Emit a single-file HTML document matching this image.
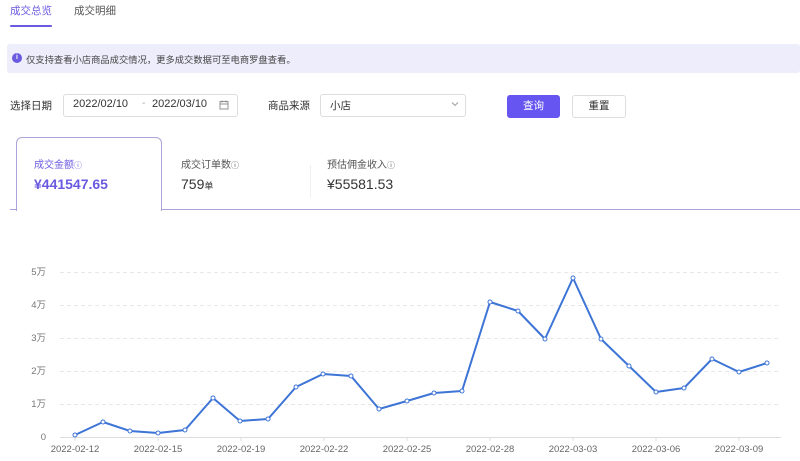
<!DOCTYPE html>
<html><head><meta charset="utf-8"><style>
*{margin:0;padding:0;box-sizing:border-box}
body{width:800px;height:461px;background:#fff;font-family:"Liberation Sans","Noto Sans CJK SC",sans-serif;position:relative;overflow:hidden;color:#333}
.a{position:absolute;white-space:nowrap}
</style></head><body>
<div class="a" style="left:10px;top:3px;font-size:10.5px;color:#6a5ae0">成交总览</div>
<div class="a" style="left:10px;top:25px;width:42px;height:2px;background:#6a5ae0;border-radius:1px"></div>
<div class="a" style="left:74px;top:3px;font-size:10.5px;color:#555">成交明细</div>

<div class="a" style="left:7px;top:44px;width:793px;height:29px;background:#eeedfb;border-radius:3px"></div>
<div class="a" style="left:12px;top:53px;width:10px;height:10px;border-radius:50%;background:#6a5ae0;color:#fff;font-size:7px;line-height:10px;text-align:center;font-weight:bold">i</div>
<div class="a" style="left:26px;top:52px;font-size:9.3px;color:#444">仅支持查看小店商品成交情况，更多成交数据可至电商罗盘查看。</div>

<div class="a" style="left:10px;top:98px;font-size:10.5px;color:#333">选择日期</div>
<div class="a" style="left:63px;top:94px;width:175px;height:23px;border:1px solid #ddd;border-radius:3px"></div>
<div class="a" style="left:73px;top:98px;font-size:11px;color:#333">2022/02/10</div>
<div class="a" style="left:142px;top:98px;font-size:10px;color:#aaa">-</div>
<div class="a" style="left:152px;top:98px;font-size:11px;color:#333">2022/03/10</div>
<svg class="a" style="left:219px;top:100px" width="10" height="10" viewBox="0 0 10 10"><rect x="1" y="1.5" width="8" height="7.5" fill="none" stroke="#888" stroke-width="0.9"/><line x1="1" y1="4" x2="9" y2="4" stroke="#888" stroke-width="0.9"/><line x1="3" y1="0.5" x2="3" y2="2.5" stroke="#888"/><line x1="7" y1="0.5" x2="7" y2="2.5" stroke="#888"/></svg>
<div class="a" style="left:268px;top:98px;font-size:10.5px;color:#333">商品来源</div>
<div class="a" style="left:320px;top:94px;width:146px;height:23px;border:1px solid #ddd;border-radius:3px"></div>
<div class="a" style="left:330px;top:98px;font-size:10.5px;color:#333">小店</div>
<svg class="a" style="left:451px;top:101px" width="8" height="6" viewBox="0 0 8 6"><polyline points="1,1.5 4,4.5 7,1.5" fill="none" stroke="#999" stroke-width="0.9"/></svg>
<div class="a" style="left:507px;top:95px;width:53px;height:23px;background:#6655f0;border-radius:3px;color:#fff;font-size:10.5px;line-height:23px;text-align:center">查询</div>
<div class="a" style="left:572px;top:95px;width:54px;height:23px;border:1px solid #ddd;border-radius:3px;color:#333;font-size:10.5px;line-height:21px;text-align:center">重置</div>

<div class="a" style="left:10px;top:209px;width:7px;height:1px;background:#aaa5d8"></div>
<div class="a" style="left:161px;top:209px;width:639px;height:1px;background:#aaa5d8"></div>
<div class="a" style="left:16px;top:137px;width:146px;height:74px;border:1px solid #aaa5d8;border-bottom:none;border-radius:6px 6px 0 0;background:#fff"></div>
<div class="a" style="left:34px;top:156px;font-size:10px;color:#6a5ae0">成交金额<span style="font-size:8px">ⓘ</span></div>
<div class="a" style="left:34px;top:176px;font-size:14px;font-weight:bold;color:#6a5ae0">¥441547.65</div>
<div class="a" style="left:181px;top:156px;font-size:10px;color:#555">成交订单数<span style="font-size:8px">ⓘ</span></div>
<div class="a" style="left:181px;top:176px;font-size:14px;color:#333">759<span style="font-size:9px">单</span></div>
<div class="a" style="left:310px;top:165px;width:1px;height:33px;background:#f0f0f0"></div>
<div class="a" style="left:327px;top:156px;font-size:10px;color:#555">预估佣金收入<span style="font-size:8px">ⓘ</span></div>
<div class="a" style="left:327px;top:176px;font-size:14px;color:#333">¥55581.53</div>

<svg class="a" style="left:0;top:0" width="800" height="461">
<g stroke="#e8e8e8" stroke-dasharray="4,3" stroke-width="1">
<line x1="60" y1="272.5" x2="781" y2="272.5"/><line x1="60" y1="305.5" x2="781" y2="305.5"/><line x1="60" y1="338.5" x2="781" y2="338.5"/><line x1="60" y1="371.5" x2="781" y2="371.5"/><line x1="60" y1="404.5" x2="781" y2="404.5"/>
</g>
<line x1="60" y1="437.5" x2="781" y2="437.5" stroke="#ddd"/>
<g stroke="#ddd"><line x1="75" y1="437" x2="75" y2="441"/><line x1="158" y1="437" x2="158" y2="441"/><line x1="241" y1="437" x2="241" y2="441"/><line x1="324" y1="437" x2="324" y2="441"/><line x1="407" y1="437" x2="407" y2="441"/><line x1="490" y1="437" x2="490" y2="441"/><line x1="573" y1="437" x2="573" y2="441"/><line x1="656" y1="437" x2="656" y2="441"/><line x1="739" y1="437" x2="739" y2="441"/></g>
<g font-family="Liberation Sans,Noto Sans CJK SC,sans-serif" font-size="9.5" fill="#777" text-anchor="end">
<text x="46" y="275">5万</text><text x="46" y="308">4万</text><text x="46" y="341">3万</text><text x="46" y="374">2万</text><text x="46" y="407">1万</text><text x="46" y="440">0</text>
</g>
<g font-family="Liberation Sans,sans-serif" font-size="9.5" fill="#666" text-anchor="middle">
<text x="75" y="452">2022-02-12</text><text x="158" y="452">2022-02-15</text><text x="241" y="452">2022-02-19</text><text x="324" y="452">2022-02-22</text><text x="407" y="452">2022-02-25</text><text x="490" y="452">2022-02-28</text><text x="573" y="452">2022-03-03</text><text x="656" y="452">2022-03-06</text><text x="739" y="452">2022-03-09</text>
</g>
<polyline fill="none" stroke="#3d74d6" stroke-width="2" stroke-linejoin="round" points="75,435 103,422 130,431 158,433 185,430 213,398 240,421 268,419 296,387 323,374 351,376 379,409 407,401 434,393 462,391 490,302 518,311 545,339 573,278 601,339 629,366 656,392 684,388 712,359 739,372 767,363"/>
<g fill="#fff" stroke="#3d74d6" stroke-width="1">
<circle cx="75" cy="435" r="2"/><circle cx="103" cy="422" r="2"/><circle cx="130" cy="431" r="2"/><circle cx="158" cy="433" r="2"/><circle cx="185" cy="430" r="2"/><circle cx="213" cy="398" r="2"/><circle cx="240" cy="421" r="2"/><circle cx="268" cy="419" r="2"/><circle cx="296" cy="387" r="2"/><circle cx="323" cy="374" r="2"/><circle cx="351" cy="376" r="2"/><circle cx="379" cy="409" r="2"/><circle cx="407" cy="401" r="2"/><circle cx="434" cy="393" r="2"/><circle cx="462" cy="391" r="2"/><circle cx="490" cy="302" r="2"/><circle cx="518" cy="311" r="2"/><circle cx="545" cy="339" r="2"/><circle cx="573" cy="278" r="2"/><circle cx="601" cy="339" r="2"/><circle cx="629" cy="366" r="2"/><circle cx="656" cy="392" r="2"/><circle cx="684" cy="388" r="2"/><circle cx="712" cy="359" r="2"/><circle cx="739" cy="372" r="2"/><circle cx="767" cy="363" r="2"/>
</g>
</svg>
</body></html>
